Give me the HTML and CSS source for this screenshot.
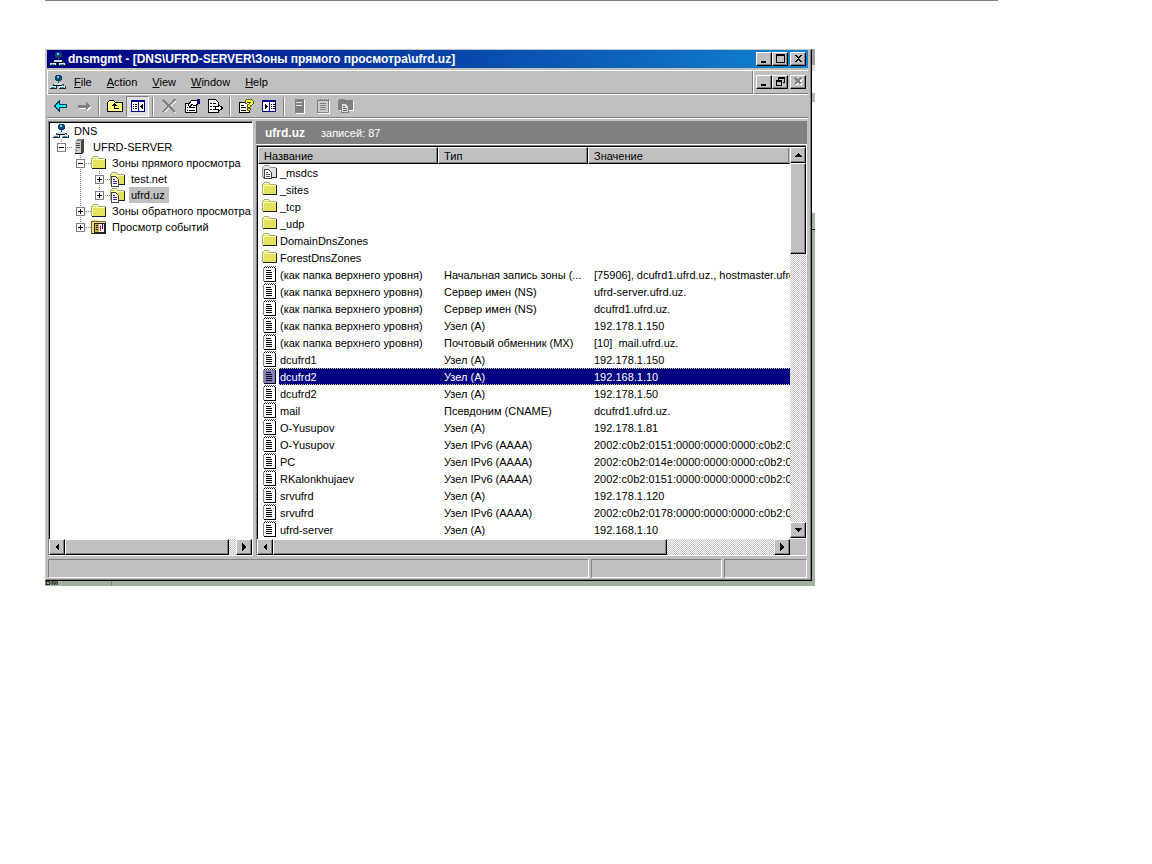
FILE: index.html
```html
<!DOCTYPE html>
<html lang="ru">
<head>
<meta charset="utf-8">
<title>dnsmgmt</title>
<link rel="stylesheet" href="styles.css">
</head>
<body>
<svg class="defs" aria-hidden="true">
  <symbol id="i-net" viewBox="0 0 16 16">
    <path d="M8 6v4M3 12v-2h10v2" fill="none" stroke="#404040"/>
    <circle cx="8.500" cy="4" r="3.500" fill="#10407c"/>
    <path d="M7 2h2v2H7z" fill="#6cf"/><path d="M6 4h1v2H6zM10 3h1v2h-1z" fill="#063"/>
    <path d="M4 9h8v2H4z" fill="#c0e0f0"/><path d="M4 11h8v1H4z" fill="#000"/>
    <path d="M0 12h6v2H0zM9 12h6v2H9z" fill="#d8f0ff"/><path d="M0 14h7v1H0zM9 14h7v1H9zM6 12h1v3H6zM15 12h1v3h-1z" fill="#223"/>
    <path d="M1 13h4v1H1zM10 13h4v1h-4z" fill="#39b"/>
  </symbol>
  <symbol id="i-server" viewBox="0 0 16 16">
    <path d="M3 2l2-2h7v13l-2 2H3z" fill="#808080"/><path d="M3 2h6v12H3z" fill="#ccc"/>
    <path d="M9 2l3-2v13l-3 2z" fill="#444"/><path d="M4 4h4v1H4zM4 6h4v1H4zM4 8h4v1H4z" fill="#555"/><path d="M3 14h7v1H3z" fill="#000"/>
    <path d="M4 11h1v1H4z" fill="#080"/>
  </symbol>
  <symbol id="i-folder" viewBox="0 0 16 16">
    <path d="M1 3h1V2h5v1h1v1h6v9H1z" fill="#e4e45c"/>
    <path d="M0 3h1v10H0zM1 2h1v1H1zM2 1h5v1H2zM7 2h1v1H7zM8 3h6v1H8z" fill="#a8a878"/>
    <path d="M1 4h1v9H1zM2 2h5v1H2zM2 4h12v1H2z" fill="#ffffc0"/>
    <path d="M1 13h14v1H1zM14 4h1v10h-1z" fill="#222"/>
  </symbol>
  <symbol id="i-sheet" viewBox="0 0 16 16">
    <path d="M1.500 5.500h4l3 3v7h-7z" fill="#fff" stroke="#444"/>
    <path d="M3 8.500h2M3 10.500h4M3 12.500h4" stroke="#3030a0"/>
  </symbol>
  <symbol id="i-zone" viewBox="0 0 16 16">
    <use href="#i-folder"/><use href="#i-sheet"/>
  </symbol>
  <symbol id="i-deleg" viewBox="0 0 16 16">
    <path d="M1 3h1V2h5v1h1v1h6v9H1z" fill="#e0e0e0"/>
    <path d="M0 3h1v10H0zM1 2h1v1H1zM2 1h5v1H2zM7 2h1v1H7zM8 3h6v1H8z" fill="#909090"/>
    <path d="M1 13h14v1H1zM14 4h1v10h-1z" fill="#222"/>
    <path d="M2.500 5.500h4l3 3v6h-7z" fill="#fff" stroke="#444"/><path d="M4 8.500h2M4 10.500h4M4 12.500h4" stroke="#555"/>
  </symbol>
  <symbol id="i-events" viewBox="0 0 16 16">
    <path d="M0 2h1V1h6v1h8v12H0z" fill="#f0e080"/><path d="M.5 2.500h14v12H.5z" fill="none" stroke="#806020"/>
    <path d="M3 4h10v9H3z" fill="#fff" stroke="#222"/><path d="M4 5h4v8H4z" fill="#c8b048"/>
    <path d="M5 6.500h2M5 8.500h2M5 10.500h2" stroke="#222"/><path d="M9 7h1v5H9z" fill="#c00"/><path d="M11 5h1v5h-1z" fill="#008"/>
    <path d="M1 14h14v1H1zM14 4h1v10h-1z" fill="#222"/>
  </symbol>
  <symbol id="i-record" viewBox="0 0 16 17">
    <path class="paper" d="M2 2h11v13H2z"/>
    <path d="M1 2h1v13H1z" fill="#888"/>
    <path d="M13 2h1v14h-1zM2 15h12v1H2z" fill="#000"/>
    <path d="M2 1.500h12" stroke="#000" stroke-dasharray="1 1"/><path d="M3 .5h11" stroke="#555" stroke-dasharray="1 1"/>
    <path d="M4 4.500h5M4 6.500h6M4 8.500h6M4 10.500h6M4 12.500h6" stroke="#000"/>
  </symbol>
  <symbol id="t-tee" viewBox="0 0 19 16"><path d="M8.500 0v16M8 8.500h11" class="dots"/></symbol>
  <symbol id="t-pass" viewBox="0 0 19 16"><path d="M8.500 0v16" class="dots"/></symbol>
  <symbol id="t-end" viewBox="0 0 19 16"><path d="M8.500 0v9M8 8.500h11" class="dots"/></symbol>
  <symbol id="t-minus" viewBox="0 0 19 16"><path d="M4.500 4.500h8v8h-8z" fill="#fff" stroke="#808080"/><path d="M6 8.500h5" stroke="#000"/></symbol>
  <symbol id="t-plus" viewBox="0 0 19 16"><path d="M4.500 4.500h8v8h-8z" fill="#fff" stroke="#808080"/><path d="M6 8.500h5M8.500 6v5" stroke="#000"/></symbol>
</svg>

<hr class="rule">
<main class="shot">
  <section class="window">
    <header class="title">
      <svg class="ic"><use href="#i-net"/></svg>
      <h1>dnsmgmt - [DNS\UFRD-SERVER\Зоны прямого просмотра\ufrd.uz]</h1>
      <div class="controls">
        <button aria-label="Minimize"><svg viewBox="0 0 11 10"><path d="M2 7h5v2H2z"/></svg></button>
        <button aria-label="Maximize"><svg viewBox="0 0 11 10"><path d="M1 0h9v9H1zM2 2v6h7V2z" fill-rule="evenodd"/></svg></button>
        <button class="apart" aria-label="Close"><svg viewBox="0 0 11 10"><path d="M2 1h2v1h1v1h1V2h1V1h2v1H8v1H7v1H6v1h1v1h1v1h1v1H7V7H6V6H5v1H4v1H2V7h1V6h1V5h1V4H4V3H3V2H2z"/></svg></button>
      </div>
    </header>

    <div class="menubar">
      <nav class="menu">
        <svg class="ic"><use href="#i-net"/></svg>
        <button><u>F</u>ile</button><button><u>A</u>ction</button><button><u>V</u>iew</button><button><u>W</u>indow</button><button><u>H</u>elp</button>
      </nav>
      <div class="controls child">
        <button aria-label="Minimize child"><svg viewBox="0 0 11 10"><path d="M2 7h5v2H2z"/></svg></button>
        <button aria-label="Restore child"><svg viewBox="0 0 11 10"><path d="M3 0h7v6H8V5h1V2H4v1H3zM1 3h6v6H1zM2 5v3h4V5z" fill-rule="evenodd"/></svg></button>
        <button class="apart" aria-label="Close child" disabled><svg viewBox="0 0 11 10"><path d="M3 2l6 6M9 2L3 8" stroke="#fff" stroke-width="1.500"/><path d="M2 1l6 6M8 1L2 7" stroke="#808080" stroke-width="1.500"/></svg></button>
      </div>
    </div>

    <div class="toolbar">
      <button aria-label="Back"><svg viewBox="0 0 16 16"><path d="M1.500 8L6 3.500V6.500h7.500v3H6V12.500z" fill="#0ff" stroke="#003c50"/></svg></button>
      <button aria-label="Forward" disabled><svg viewBox="0 0 16 16"><path d="M15 9l-4 4.500V11H3v-1h8z" fill="#fff"/><path d="M14.500 8L9.500 3V6.500H2v3h7.500V13z" fill="#808080"/></svg></button>
      <i></i>
      <button aria-label="Up one level"><svg viewBox="0 0 16 16"><path d="M.5 4.500l2-2h4l2 2h7v9H.5z" fill="#ffff80" stroke="#000"/><path d="M7 5h1v1h1v1h1v1H8v2h4v1H7V8H5V7h1V6h1z" fill="#000"/></svg></button>
      <button class="pressed" aria-label="Show or hide tree" aria-pressed="true"><svg viewBox="0 0 16 16"><path d="M1.500 2.500h13v11h-13z" fill="#fff" stroke="#000080"/><path d="M1 2h14v2H1zM8 4h1v9H8z" fill="#000080"/><path d="M3 6h1v1H3zM5 6h2v1H5zM3 8h1v1H3zM5 8h2v1H5zM3 10h1v1H3zM5 10h2v1H5zM13 5v7l-3-3.500z" fill="#000"/></svg></button>
      <i></i>
      <button aria-label="Delete" disabled><svg viewBox="0 0 16 16"><path d="M3 3l12 12M15 3L4 14" stroke="#fff" stroke-width="1"/><path d="M2 2l12 12M14 1L2 14" stroke="#808080" stroke-width="1.500"/></svg></button>
      <button aria-label="Properties"><svg viewBox="0 0 16 16"><path d="M1.500 5.500h11v9h-11z" fill="#fff" stroke="#000"/><path d="M3 9h1v1H3zM5 9h6v1H5zM3 12h1v1H3zM5 12h6v1H5z" fill="#000"/><path d="M4 7l4-5h5l1 4-4 2-2-2-2 3z" fill="#fff" stroke="#000"/><path d="M13 1h3v5h-3z" fill="#000080"/></svg></button>
      <button aria-label="Export list"><svg viewBox="0 0 16 16"><path d="M1.500 1.500h7l3 3v10h-10z" fill="#fff" stroke="#000"/><path d="M3 5h2v1H3zM6 5h3v1H6zM3 8h2v1H3zM6 8h2v1H6zM3 11h2v1H3zM6 11h3v1H6z" fill="#000"/><path d="M8.500 8.500h3v-2l4 3.500-4 3.500v-2h-3z" fill="#fff" stroke="#000"/></svg></button>
      <i></i>
      <button aria-label="Help"><svg viewBox="0 0 16 16"><path d="M1.500 4.500h10v10h-10z" fill="#fff" stroke="#000"/><path d="M3 7h3v1H3zM3 9h5v1H3zM3 12h5v1H3z" fill="#000"/><path d="M7 5V3l2-2h4l2 2v3l-3 2v1H9V7l3-2V4H9v1zM9 10h3v2H9z" fill="#ffff20" stroke="#404000" stroke-width=".8"/></svg></button>
      <button aria-label="Show action pane"><svg viewBox="0 0 16 16"><path d="M1.500 2.500h13v11h-13z" fill="#fff" stroke="#000080"/><path d="M1 2h14v2H1zM8 4h1v9H8z" fill="#000080"/><path d="M10 6h1v1h-1zM12 6h2v1h-2zM10 8h1v1h-1zM12 8h2v1h-2zM10 10h1v1h-1zM12 10h2v1h-2zM4 5v7l3-3.500z" fill="#000"/></svg></button>
      <i></i>
      <button aria-label="New server" disabled><svg viewBox="0 0 16 16"><path d="M4 2h9v14H4z" fill="#fff"/><path d="M3 1h8l1 1v13H3z" fill="#808080"/><path d="M4 4h6v1H4zM4 7h6v1H4z" fill="#e0e0e0"/></svg></button>
      <button aria-label="New record" disabled><svg viewBox="0 0 16 16"><path d="M3 3h12v13H3z" fill="#fff"/><path d="M2.500 2.500h11v12h-11z" fill="#ccc" stroke="#808080"/><path d="M3 1.500h11" stroke="#808080" stroke-dasharray="1 1"/><path d="M5 5.500h6M5 7.500h6M5 9.500h6M5 11.500h6" stroke="#808080"/></svg></button>
      <button aria-label="New zone" disabled><svg viewBox="0 0 16 16"><path d="M2 3h14v10H2z" fill="#fff"/><path d="M0 2l1-1h5l1 1h8v10H0z" fill="#808080"/><path d="M3.500 5.500h4l3 3v6h-7z" fill="#ddd" stroke="#808080"/><path d="M5 8.500h2M5 10.500h4M5 12.500h4" stroke="#666"/></svg></button>
    </div>

    <div class="panes">
      <aside class="sunken tree-pane">
        <ul class="tree">
          <li><svg class="ic"><use href="#i-net"/></svg><span>DNS</span></li>
          <li><svg class="slot"><use href="#t-end"/><use href="#t-minus"/></svg><svg class="ic"><use href="#i-server"/></svg><span>UFRD-SERVER</span></li>
          <li><b class="slot"></b><svg class="slot"><use href="#t-tee"/><use href="#t-minus"/></svg><svg class="ic"><use href="#i-folder"/></svg><span>Зоны прямого просмотра</span></li>
          <li><b class="slot"></b><svg class="slot"><use href="#t-pass"/></svg><svg class="slot"><use href="#t-tee"/><use href="#t-plus"/></svg><svg class="ic"><use href="#i-zone"/></svg><span>test.net</span></li>
          <li><b class="slot"></b><svg class="slot"><use href="#t-pass"/></svg><svg class="slot"><use href="#t-end"/><use href="#t-plus"/></svg><svg class="ic"><use href="#i-zone"/></svg><span class="current">ufrd.uz</span></li>
          <li><b class="slot"></b><svg class="slot"><use href="#t-tee"/><use href="#t-plus"/></svg><svg class="ic"><use href="#i-folder"/></svg><span>Зоны обратного просмотра</span></li>
          <li><b class="slot"></b><svg class="slot"><use href="#t-end"/><use href="#t-plus"/></svg><svg class="ic"><use href="#i-events"/></svg><span>Просмотр событий</span></li>
        </ul>
        <div class="hscroll">
          <button aria-label="Scroll tree left"><svg viewBox="0 0 8 8"><path d="M6 0v8L2 4z"/></svg></button>
          <div class="thumb tree-thumb"></div><div class="track"></div>
          <button aria-label="Scroll tree right"><svg viewBox="0 0 8 8"><path d="M2 0v8l4-4z"/></svg></button>
        </div>
      </aside>

      <section class="detail">
        <div class="caption"><strong>ufrd.uz</strong><span>записей: 87</span></div>
        <div class="sunken list-pane">
          <div class="list">
            <table>
              <colgroup><col class="c-name"><col class="c-type"><col></colgroup>
              <thead><tr><th>Название</th><th>Тип</th><th>Значение</th></tr></thead>
              <tbody>
                <tr><td><div class="name"><svg class="ic"><use href="#i-deleg"/></svg><span>_msdcs</span></div></td><td></td><td></td></tr>
                <tr><td><div class="name"><svg class="ic"><use href="#i-folder"/></svg><span>_sites</span></div></td><td></td><td></td></tr>
                <tr><td><div class="name"><svg class="ic"><use href="#i-folder"/></svg><span>_tcp</span></div></td><td></td><td></td></tr>
                <tr><td><div class="name"><svg class="ic"><use href="#i-folder"/></svg><span>_udp</span></div></td><td></td><td></td></tr>
                <tr><td><div class="name"><svg class="ic"><use href="#i-folder"/></svg><span>DomainDnsZones</span></div></td><td></td><td></td></tr>
                <tr><td><div class="name"><svg class="ic"><use href="#i-folder"/></svg><span>ForestDnsZones</span></div></td><td></td><td></td></tr>
                <tr><td><div class="name"><svg class="rec"><use href="#i-record"/></svg><span>(как папка верхнего уровня)</span></div></td><td>Начальная запись зоны (...</td><td>[75906], dcufrd1.ufrd.uz., hostmaster.ufrd.</td></tr>
                <tr><td><div class="name"><svg class="rec"><use href="#i-record"/></svg><span>(как папка верхнего уровня)</span></div></td><td>Сервер имен (NS)</td><td>ufrd-server.ufrd.uz.</td></tr>
                <tr><td><div class="name"><svg class="rec"><use href="#i-record"/></svg><span>(как папка верхнего уровня)</span></div></td><td>Сервер имен (NS)</td><td>dcufrd1.ufrd.uz.</td></tr>
                <tr><td><div class="name"><svg class="rec"><use href="#i-record"/></svg><span>(как папка верхнего уровня)</span></div></td><td>Узел (A)</td><td>192.178.1.150</td></tr>
                <tr><td><div class="name"><svg class="rec"><use href="#i-record"/></svg><span>(как папка верхнего уровня)</span></div></td><td>Почтовый обменник (MX)</td><td>[10]&nbsp; mail.ufrd.uz.</td></tr>
                <tr><td><div class="name"><svg class="rec"><use href="#i-record"/></svg><span>dcufrd1</span></div></td><td>Узел (A)</td><td>192.178.1.150</td></tr>
                <tr class="selected"><td><div class="name"><svg class="rec"><use href="#i-record"/></svg><span>dcufrd2</span></div></td><td>Узел (A)</td><td>192.168.1.10</td></tr>
                <tr><td><div class="name"><svg class="rec"><use href="#i-record"/></svg><span>dcufrd2</span></div></td><td>Узел (A)</td><td>192.178.1.50</td></tr>
                <tr><td><div class="name"><svg class="rec"><use href="#i-record"/></svg><span>mail</span></div></td><td>Псевдоним (CNAME)</td><td>dcufrd1.ufrd.uz.</td></tr>
                <tr><td><div class="name"><svg class="rec"><use href="#i-record"/></svg><span>O-Yusupov</span></div></td><td>Узел (A)</td><td>192.178.1.81</td></tr>
                <tr><td><div class="name"><svg class="rec"><use href="#i-record"/></svg><span>O-Yusupov</span></div></td><td>Узел IPv6 (AAAA)</td><td>2002:c0b2:0151:0000:0000:0000:c0b2:0</td></tr>
                <tr><td><div class="name"><svg class="rec"><use href="#i-record"/></svg><span>PC</span></div></td><td>Узел IPv6 (AAAA)</td><td>2002:c0b2:014e:0000:0000:0000:c0b2:0</td></tr>
                <tr><td><div class="name"><svg class="rec"><use href="#i-record"/></svg><span>RKalonkhujaev</span></div></td><td>Узел IPv6 (AAAA)</td><td>2002:c0b2:0151:0000:0000:0000:c0b2:0</td></tr>
                <tr><td><div class="name"><svg class="rec"><use href="#i-record"/></svg><span>srvufrd</span></div></td><td>Узел (A)</td><td>192.178.1.120</td></tr>
                <tr><td><div class="name"><svg class="rec"><use href="#i-record"/></svg><span>srvufrd</span></div></td><td>Узел IPv6 (AAAA)</td><td>2002:c0b2:0178:0000:0000:0000:c0b2:0</td></tr>
                <tr><td><div class="name"><svg class="rec"><use href="#i-record"/></svg><span>ufrd-server</span></div></td><td>Узел (A)</td><td>192.168.1.10</td></tr>
              </tbody>
            </table>
            <div class="vscroll">
              <button aria-label="Scroll up"><svg viewBox="0 0 8 8"><path d="M0 6h8L4 2z"/></svg></button>
              <div class="thumb v-thumb"></div><div class="track"></div>
              <button aria-label="Scroll down"><svg viewBox="0 0 8 8"><path d="M0 2h8L4 6z"/></svg></button>
            </div>
          </div>
          <div class="hscroll list-scroll">
            <button aria-label="Scroll list left"><svg viewBox="0 0 8 8"><path d="M6 0v8L2 4z"/></svg></button>
            <div class="thumb list-thumb"></div><div class="track"></div>
            <button aria-label="Scroll list right"><svg viewBox="0 0 8 8"><path d="M2 0v8l4-4z"/></svg></button>
          </div>
        </div>
      </section>
    </div>

    <footer class="status"><div></div><div></div><div></div></footer>
  </section>
  <div class="behind"><span>вм</span></div>
</main>
</body>
</html>
```
FILE: styles.css
```css
* { box-sizing: border-box; }

body {
  margin: 0;
  background: #fff;
  color: #000;
  font: 11px/16px "Liberation Sans", Arial, sans-serif;
}

button {
  margin: 0;
  padding: 0;
  border: 0;
  background: none;
  color: inherit;
  font: inherit;
}

svg { display: block; flex: none; shape-rendering: crispEdges; }
.defs { position: absolute; width: 0; height: 0; }
.ic { width: 16px; height: 16px; }
.rec { width: 16px; height: 17px; }
.dots { fill: none; stroke: #808080; stroke-dasharray: 1 1; }
.paper { fill: var(--paper, #fff); }

.rule {
  height: 1px;
  margin: 0 154px 48px 45px;
  border: 0;
  background: #808080;
}

/* Desktop visible around the window */
.shot {
  margin: 0 337px 0 45px;
  padding-right: 3px;
  background: linear-gradient(#a0a0a0 16px, #e0e0e0 16px 22px, #fff 22px 44px, #b4b4b4 44px 53px, #fff 53px 164px, #a3b2a0 164px 180px, #000 180px 181px, #a3b2a0 181px);
}

.behind {
  height: 5px;
  overflow: hidden;
  background: linear-gradient(90deg, #a3b2a0 66px, #7c887a 66px 67px, #a3b2a0 67px);
}
.behind span { display: block; margin-top: -6px; line-height: 12px; }

.window {
  padding: 0 2px 2px 1px;
  border: 1px solid #c8c8c8;
  border-right-color: #000;
  border-bottom-color: #000;
  background: #c0c0c0;
  box-shadow: inset -1px -1px #808080;
}

.title {
  display: flex;
  align-items: center;
  height: 18px;
  margin-right: 1px;
  padding: 0 2px 0 3px;
  background: linear-gradient(90deg, #000080, #1084d0);
  color: #fff;
}
.title h1 {
  flex: 1;
  margin: 0 0 0 2px;
  overflow: hidden;
  font-size: 12px;
  font-weight: bold;
  line-height: 18px;
  white-space: nowrap;
}

.controls { display: flex; align-items: center; }
.controls button {
  display: grid;
  place-items: center;
  width: 16px;
  height: 14px;
  border: 1px solid #fff;
  border-right-color: #000;
  border-bottom-color: #000;
  background: #c0c0c0;
  box-shadow: inset -1px -1px #808080;
}
.controls .apart { margin-left: 2px; }
.controls svg { width: 11px; height: 10px; }

.menubar {
  display: flex;
  height: 24px;
  margin: 2px 1px 0 0;
  border: 1px solid #fff;
  border-width: 1px 0 0 1px;
}
.menu {
  display: flex;
  flex: 1;
  gap: 1px;
  align-items: center;
  border-right: 1px solid #808080;
  border-bottom: 1px solid #808080;
}
.menu .ic { margin-left: 2px; }
.menu button { padding: 0 7px; }
.child { padding: 0 2px; border-left: 1px solid #fff; border-bottom: 1px solid #808080; }

.toolbar {
  display: flex;
  align-items: center;
  height: 24px;
  margin: 0 1px 0 0;
  padding-left: 2px;
  border-top: 1px solid #fff;
  border-bottom: 1px solid #808080;
  box-shadow: 0 1px #fff;
}
.toolbar button { display: grid; place-items: center; width: 23px; height: 21px; }
.toolbar svg { width: 16px; height: 16px; }
.toolbar i {
  width: 2px;
  height: 19px;
  margin: 0 3px;
  border-left: 1px solid #808080;
  border-right: 1px solid #fff;
}
.toolbar .pressed {
  border: 1px solid #808080;
  border-right-color: #fff;
  border-bottom-color: #fff;
  background: #e0e0e0;
}

.panes {
  display: grid;
  grid-template-columns: 205px minmax(0, 1fr);
  gap: 3px;
  margin: 3px 2px 0 1px;
}

.sunken {
  border: 1px solid #fff;
  border-top-color: #808080;
  border-left-color: #808080;
  background: #fff;
}
.tree-pane { display: flex; flex-direction: column; min-width: 0; }
.tree {
  flex: 1;
  margin: 0;
  padding: 0 0 0 3px;
  overflow: hidden;
  border-top: 1px solid #000;
  border-left: 1px solid #000;
  list-style: none;
  white-space: nowrap;
}
.tree li { display: flex; height: 16px; }
.tree .ic { margin-right: 3px; }
.tree span { padding: 0 2px; }
.tree .current { padding-right: 4px; background: #c0c0c0; }
.slot { flex: none; width: 19px; height: 16px; }

.caption {
  display: flex;
  gap: 16px;
  height: 24px;
  padding: 4px 9px;
  border-bottom: 1px solid #fff;
  background: #808080;
  color: #fff;
}
.caption strong { font-size: 12px; }

.list {
  display: flex;
  padding-bottom: 1px;
  border-top: 1px solid #000;
  border-left: 1px solid #000;
}
table {
  flex: 1;
  width: 0;
  table-layout: fixed;
  border-collapse: separate;
  border-spacing: 0;
}
.c-name { width: 180px; }
.c-type { width: 150px; }
th, td {
  height: 17px;
  padding: 1px 0 0 6px;
  line-height: 16px;
  text-align: left;
  white-space: nowrap;
}
th {
  padding: 1px 0 0 5px;
  border: 1px solid #fff;
  border-right-color: #000;
  border-bottom-color: #000;
  background: #c0c0c0;
  box-shadow: inset -1px -1px #808080;
  font-weight: normal;
  line-height: 14px;
}
th:last-child { border-right-color: #c0c0c0; }
td:first-child { padding: 0 0 0 4px; }
.name { display: flex; height: 17px; }
.name span { flex: 1; margin-left: 1px; padding: 1px 0 0 1px; }

.selected { --paper: #8080c0; }
.selected td:not(:first-child), .selected .name span {
  background:
    repeating-linear-gradient(90deg, #d0d080 0 1px, #000080 1px 2px) top / 100% 1px no-repeat,
    repeating-linear-gradient(90deg, #d0d080 0 1px, #000080 1px 2px) bottom / 100% 1px no-repeat,
    #000080;
  color: #fff;
}

.vscroll { display: flex; flex-direction: column; width: 16px; }
.hscroll { display: flex; height: 16px; }
.list-scroll { padding-right: 16px; background: #c0c0c0; }
.hscroll button, .vscroll button, .thumb {
  display: grid;
  flex: none;
  place-items: center;
  width: 16px;
  height: 16px;
  border: 1px solid #fff;
  border-right-color: #000;
  border-bottom-color: #000;
  background: #c0c0c0;
  box-shadow: inset -1px -1px #808080;
}
.hscroll svg, .vscroll svg { width: 8px; height: 8px; }
.track {
  flex: 1;
  background: repeating-conic-gradient(#c0c0c0 0 25%, #fff 0 50%) 0 0 / 2px 2px;
}
.hscroll .tree-thumb { width: 81%; }
.hscroll .list-thumb { width: 74%; }
.vscroll .v-thumb { height: 91px; }

.status {
  display: grid;
  grid-template-columns: minmax(0, 1fr) 131px 83px;
  gap: 2px;
  margin: 3px 2px 0 1px;
}
.status div {
  height: 19px;
  border: 1px solid #808080;
  border-right-color: #fff;
  border-bottom-color: #fff;
}
```
